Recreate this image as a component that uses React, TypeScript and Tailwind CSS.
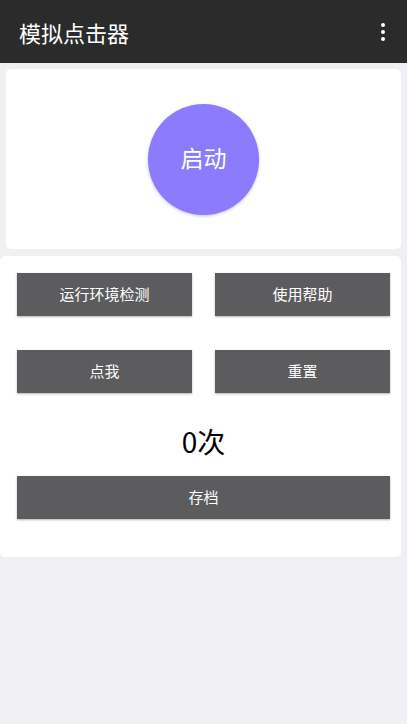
import React, { useState } from 'react';

const font = { fontFamily: '"Noto Sans CJK SC", "Noto Sans", sans-serif' };

const GrayButton: React.FC<{ label: string; onClick?: () => void; className?: string }> = ({ label, onClick, className }) => (
  <button
    onClick={onClick}
    className={`h-[43px] bg-[#5c5c5e] text-white text-[15px] shadow-[0_1px_2px_rgba(0,0,0,0.3)] flex items-center justify-center ${className ?? ''}`}
  >
    {label}
  </button>
);

const App: React.FC = () => {
  const [count, setCount] = useState(0);

  return (
    <div className="w-[407px] h-[724px] bg-[#f0f0f2] flex flex-col" style={font}>
      <header className="h-[63px] bg-[#2b2b2b] flex items-center justify-between pl-[19px] pr-[22px] shrink-0">
        <h1 className="text-white text-[22px] leading-none">模拟点击器</h1>
        <div className="flex flex-col gap-[3px] items-center">
          <span className="w-[4px] h-[4px] rounded-full bg-white" />
          <span className="w-[4px] h-[4px] rounded-full bg-white" />
          <span className="w-[4px] h-[4px] rounded-full bg-white" />
        </div>
      </header>

      <section className="mt-[6px] mx-[6px] h-[180px] bg-white rounded-[5px] flex items-center justify-center">
        <button className="w-[111px] h-[111px] rounded-full bg-[#8c7bfd] text-white text-[23px] leading-none pb-[3px] shadow-[0_1px_3px_rgba(90,70,200,0.35)]">
          启动
        </button>
      </section>

      <section className="mt-[7px] mr-[6px] bg-white rounded-[5px] pt-[17px] pb-[38px] pl-[17px] pr-[11px] flex flex-col">
        <div className="grid grid-cols-2 gap-x-[23px] gap-y-[34px]">
          <GrayButton label="运行环境检测" />
          <GrayButton label="使用帮助" />
          <GrayButton label="点我" onClick={() => setCount(c => c + 1)} />
          <GrayButton label="重置" onClick={() => setCount(0)} />
        </div>
        <div className="h-[83px] pt-[12px] flex items-center justify-center text-black text-[28px]">{count}次</div>
        <GrayButton label="存档" />
      </section>
    </div>
  );
};

export default App;
